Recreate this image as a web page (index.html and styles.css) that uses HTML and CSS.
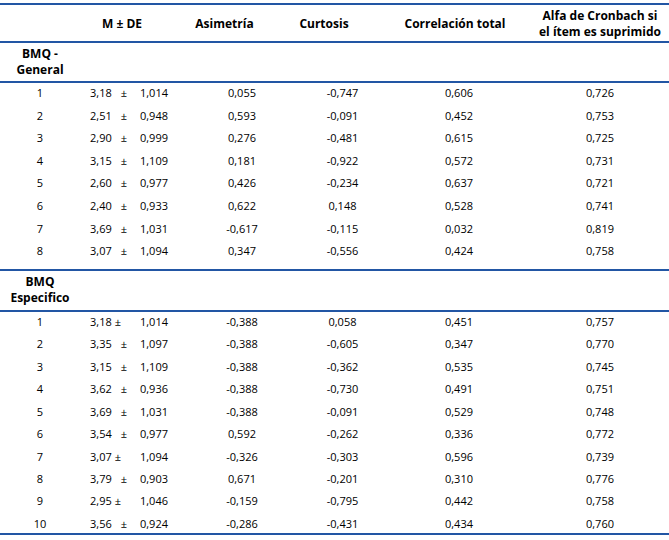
FILE: index.html
```html
<!DOCTYPE html>
<html lang="es">
<head>
<meta charset="utf-8">
<title>BMQ</title>
<link rel="stylesheet" href="styles.css">
</head>
<body>
<table class="bmq">
  <colgroup>
    <col class="w1"><col class="w2"><col class="w3"><col class="w4"><col class="w5"><col class="w6">
  </colgroup>
  <thead>
    <tr>
      <th></th>
      <th class="h2">M ± DE</th>
      <th class="h3">Asimetría</th>
      <th class="h4">Curtosis</th>
      <th class="h5">Correlación total</th>
      <th class="h6">Alfa de Cronbach si<br>el ítem es suprimido</th>
    </tr>
  </thead>
  <tbody class="sec1">
    <tr class="group"><th>BMQ -<br>General</th><td colspan="5"></td></tr>
    <tr><td>1</td><td><div class="mde"><span>3,18</span><span class="pm">±</span><span class="sd">1,014</span></div></td><td>0,055</td><td>-0,747</td><td>0,606</td><td>0,726</td></tr>
    <tr><td>2</td><td><div class="mde"><span>2,51</span><span class="pm">±</span><span class="sd">0,948</span></div></td><td>0,593</td><td>-0,091</td><td>0,452</td><td>0,753</td></tr>
    <tr><td>3</td><td><div class="mde"><span>2,90</span><span class="pm">±</span><span class="sd">0,999</span></div></td><td>0,276</td><td>-0,481</td><td>0,615</td><td>0,725</td></tr>
    <tr><td>4</td><td><div class="mde"><span>3,15</span><span class="pm">±</span><span class="sd">1,109</span></div></td><td>0,181</td><td>-0,922</td><td>0,572</td><td>0,731</td></tr>
    <tr><td>5</td><td><div class="mde"><span>2,60</span><span class="pm">±</span><span class="sd">0,977</span></div></td><td>0,426</td><td>-0,234</td><td>0,637</td><td>0,721</td></tr>
    <tr><td>6</td><td><div class="mde"><span>2,40</span><span class="pm">±</span><span class="sd">0,933</span></div></td><td>0,622</td><td>0,148</td><td>0,528</td><td>0,741</td></tr>
    <tr><td>7</td><td><div class="mde"><span>3,69</span><span class="pm">±</span><span class="sd">1,031</span></div></td><td>-0,617</td><td>-0,115</td><td>0,032</td><td>0,819</td></tr>
    <tr class="last"><td>8</td><td><div class="mde"><span>3,07</span><span class="pm">±</span><span class="sd">1,094</span></div></td><td>0,347</td><td>-0,556</td><td>0,424</td><td>0,758</td></tr>
  </tbody>
  <tbody class="sec2">
    <tr class="group"><th>BMQ<br>Especifico</th><td colspan="5"></td></tr>
    <tr class="first"><td>1</td><td><div class="mde tight"><span>3,18</span><span class="pm">±</span><span class="sd">1,014</span></div></td><td>-0,388</td><td>0,058</td><td>0,451</td><td>0,757</td></tr>
    <tr><td>2</td><td><div class="mde"><span>3,35</span><span class="pm">±</span><span class="sd">1,097</span></div></td><td>-0,388</td><td>-0,605</td><td>0,347</td><td>0,770</td></tr>
    <tr><td>3</td><td><div class="mde"><span>3,15</span><span class="pm">±</span><span class="sd">1,109</span></div></td><td>-0,388</td><td>-0,362</td><td>0,535</td><td>0,745</td></tr>
    <tr><td>4</td><td><div class="mde"><span>3,62</span><span class="pm">±</span><span class="sd">0,936</span></div></td><td>-0,388</td><td>-0,730</td><td>0,491</td><td>0,751</td></tr>
    <tr><td>5</td><td><div class="mde"><span>3,69</span><span class="pm">±</span><span class="sd">1,031</span></div></td><td>-0,388</td><td>-0,091</td><td>0,529</td><td>0,748</td></tr>
    <tr><td>6</td><td><div class="mde"><span>3,54</span><span class="pm">±</span><span class="sd">0,977</span></div></td><td>0,592</td><td>-0,262</td><td>0,336</td><td>0,772</td></tr>
    <tr><td>7</td><td><div class="mde tight"><span>3,07</span><span class="pm">±</span><span class="sd">1,094</span></div></td><td>-0,326</td><td>-0,303</td><td>0,596</td><td>0,739</td></tr>
    <tr><td>8</td><td><div class="mde"><span>3,79</span><span class="pm">±</span><span class="sd">0,903</span></div></td><td>0,671</td><td>-0,201</td><td>0,310</td><td>0,776</td></tr>
    <tr><td>9</td><td><div class="mde tight"><span>2,95</span><span class="pm">±</span><span class="sd">1,046</span></div></td><td>-0,159</td><td>-0,795</td><td>0,442</td><td>0,758</td></tr>
    <tr class="last"><td>10</td><td><div class="mde"><span>3,56</span><span class="pm">±</span><span class="sd">0,924</span></div></td><td>-0,286</td><td>-0,431</td><td>0,434</td><td>0,760</td></tr>
  </tbody>
</table>
</body>
</html>
```
FILE: styles.css
```css
html, body {
  margin: 0;
  padding: 0;
  background: #ffffff;
}

body {
  font-family: "Open Sans", "Liberation Sans", sans-serif;
  color: #000000;
}

.bmq {
  width: 669px;
  margin-top: 3px;
  border-collapse: separate;
  border-spacing: 0;
  table-layout: fixed;
  font-size: 11px;
}

.w1 { width: 80px; }
.w2 { width: 92px; }
.w3 { width: 108px; }
.w4 { width: 92px; }
.w5 { width: 166px; }
.w6 { width: 131px; }

.bmq th,
.bmq td {
  padding: 0;
  text-align: center;
  font-weight: 400;
}

/* header */
.bmq thead th {
  border-top: 2px solid #2256a4;
  border-bottom: 2px solid #2256a4;
  padding-top: 2px;
  padding-bottom: 0;
  line-height: 16.4px;
  font-size: 12px;
  font-weight: 700;
  vertical-align: middle;
}

.bmq thead th.h6 {
  padding-top: 2.6px;
  padding-bottom: 0.6px;
  padding-right: 7px;
}

.bmq thead th.h2 { padding-right: 8px; }
.bmq thead th.h3 { padding-right: 3px; }
.bmq thead th.h4 { padding-right: 4px; }

/* group rows */
.group th,
.group td {
  border-bottom: 2px solid #2256a4;
  line-height: 16.4px;
  vertical-align: middle;
}

.group th {
  font-size: 12px;
  font-weight: 700;
}

.sec1 .group th { padding: 2.6px 0; }

.sec2 .group th,
.sec2 .group td {
  border-top: 2px solid #2256a4;
}

.sec2 .group th { padding: 3.1px 0; }

/* data rows */
.bmq tbody tr:not(.group) td {
  line-height: 16px;
  padding-top: 2px;
  vertical-align: top;
}

.sec1 tr:not(.group) td { padding-bottom: 4.6px; }
.sec1 tr.last td { padding-bottom: 9.8px; }

.sec2 tr:not(.group) td { padding-bottom: 4.44px; }
.sec2 tr.first td { padding-top: 5px; }
.sec2 tr.last td {
  padding-bottom: 1.5px;
  border-bottom: 2px solid #2256a4;
}

.bmq tbody tr:not(.group) td:nth-child(3) { padding-left: 32px; }
.bmq tbody tr:not(.group) td:nth-child(4) { padding-left: 33px; }
.bmq tbody tr:not(.group) td:nth-child(5) { padding-left: 8px; }
.bmq tbody tr:not(.group) td:nth-child(6) { padding-right: 7px; }

.mde {
  display: flex;
  padding-left: 10px;
  padding-right: 4px;
  white-space: nowrap;
}

.mde .pm { margin-left: 9px; }
.mde.tight .pm { margin-left: 3px; }
.mde .sd { margin-left: auto; }
```
